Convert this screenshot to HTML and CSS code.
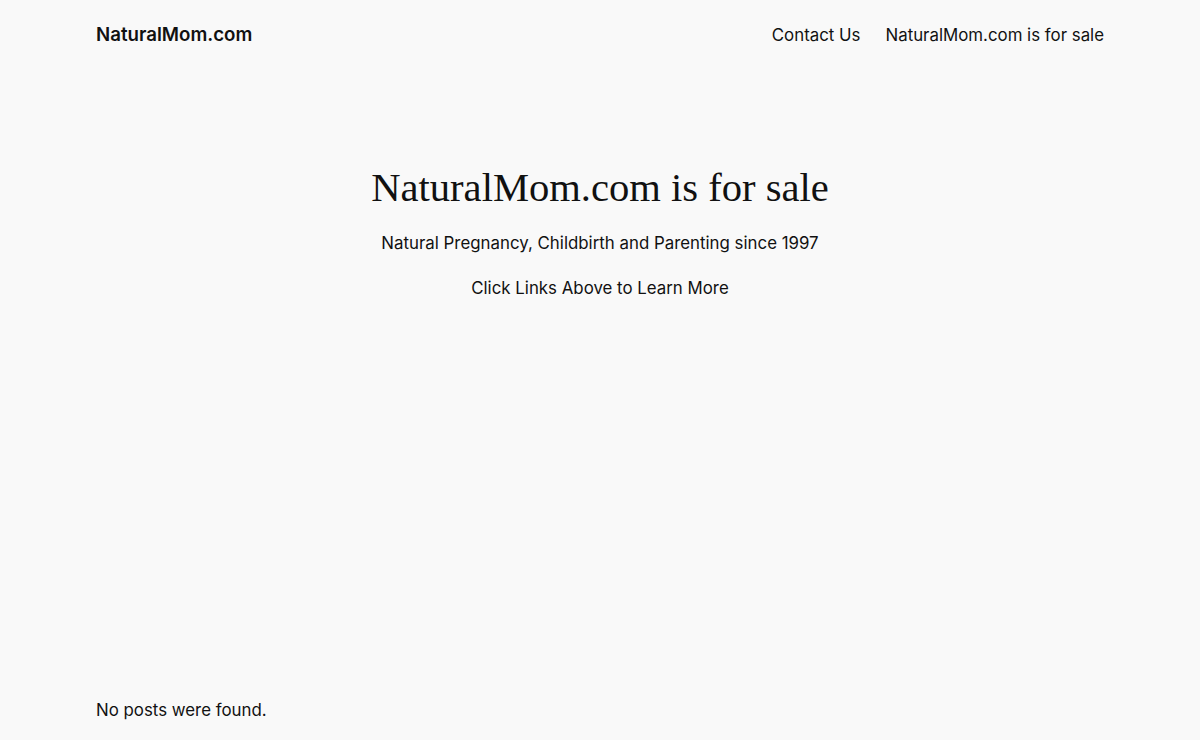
FILE: index.html
```html
<!DOCTYPE html>
<html lang="en">
<head>
<meta charset="utf-8">
<title>NaturalMom.com</title>
<link rel="stylesheet" href="styles.css">
</head>
<body>
<header class="site-header">
  <a class="site-title" href="#">NaturalMom.com</a>
  <nav class="site-nav">
    <a href="#">Contact Us</a>
    <a href="#">NaturalMom.com is for sale</a>
  </nav>
</header>
<main class="site-main">
  <section class="hero">
    <h1 class="hero-title">NaturalMom.com is for sale</h1>
    <p class="hero-text">Natural Pregnancy, Childbirth and Parenting since 1997</p>
    <p class="hero-text">Click Links Above to Learn More</p>
  </section>
  <p class="no-posts">No posts were found.</p>
</main>
</body>
</html>
```
FILE: styles.css
```css
html, body {
  margin: 0;
  padding: 0;
}
body {
  background: #f9f9f9;
  color: #111111;
  font-family: Inter, "Noto Sans", sans-serif;
  font-size: 16.85px;
  line-height: 1.56;
  height: 740px;
  overflow: hidden;
}
a {
  color: inherit;
  text-decoration: none;
}
.site-header {
  display: flex;
  justify-content: space-between;
  align-items: center;
  padding: 21px 96px 0;
  height: 28px;
}
.site-title {
  font-weight: 600;
  font-size: 18.7px;
}
.site-nav {
  display: flex;
  gap: 25px;
}
.site-main {
  padding: 0 96px;
}
.hero {
  display: flex;
  flex-direction: column;
  align-items: center;
  padding-top: 115px;
}
.hero-title {
  font-family: "Liberation Serif", "DejaVu Serif", serif;
  font-weight: 400;
  font-size: 40.6px;
  line-height: 1.2;
  margin: 0 0 17px;
}
.hero-text {
  margin: 0 0 18.6px;
}
.hero-text:last-child {
  margin-bottom: 17px;
}
.no-posts {
  margin: 0;
  padding-top: 379px;
}
```
